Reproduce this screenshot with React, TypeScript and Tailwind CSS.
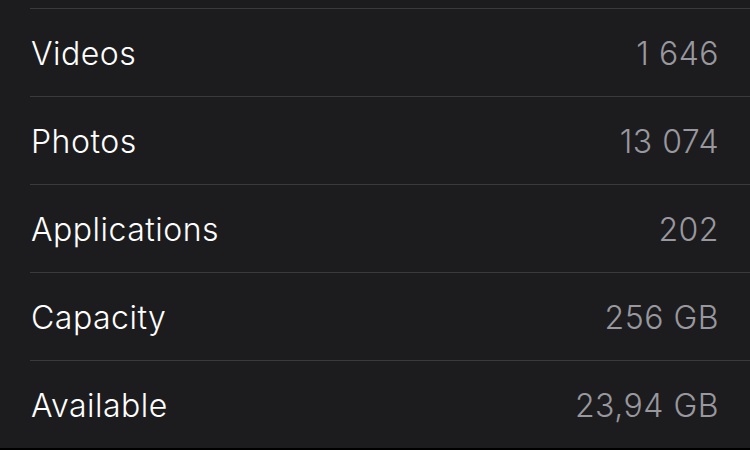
import React from 'react';

type Row = { label: string; value: string };

const rows: Row[] = [
  { label: 'Videos', value: '1 646' },
  { label: 'Photos', value: '13 074' },
  { label: 'Applications', value: '202' },
  { label: 'Capacity', value: '256 GB' },
  { label: 'Available', value: '23,94 GB' },
];

const App: React.FC = () => {
  return (
    <div
      className="w-[750px] h-[450px] bg-black overflow-hidden"
      style={{ fontFamily: 'Inter, "Noto Sans", sans-serif' }}
    >
      <div className="h-[448px] bg-[#1c1c1e] pt-[8px]">
        {rows.map((r) => (
          <div key={r.label} className="ml-[30px] border-t border-[#3a3a3d] h-[88px] flex items-center justify-between pl-[1px] pr-[31px] pt-[2px]">
            <span className="text-white text-[32px] font-[350] tracking-[0.5px]">{r.label}</span>
            <span className="text-[#98989e] text-[32px] font-[350] tracking-[0.5px]">{r.value}</span>
          </div>
        ))}
      </div>
    </div>
  );
};

export default App;
